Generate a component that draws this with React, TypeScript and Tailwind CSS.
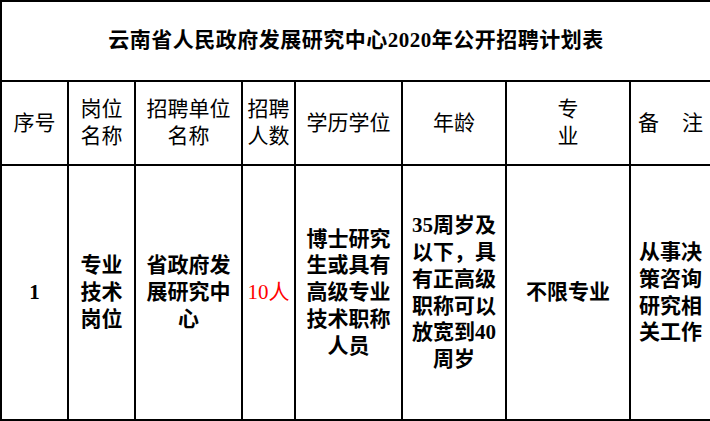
import React from 'react';

const font = { fontFamily: '"Liberation Serif", "Noto Sans CJK SC", serif' };

const cell = 'border-2 border-black text-center align-middle p-0';

interface Row {
  no: string;
  post: string[];
  unit: string[];
  count: string;
  edu: string[];
  age: string[];
  major: string[];
  note: string[];
}

const rows: Row[] = [
  {
    no: '1',
    post: ['专业', '技术', '岗位'],
    unit: ['省政府发', '展研究中', '心'],
    count: '10人',
    edu: ['博士研究', '生或具有', '高级专业', '技术职称', '人员'],
    age: ['35周岁及', '以下，具', '有正高级', '职称可以', '放宽到40', '周岁'],
    major: ['不限专业'],
    note: ['从事决', '策咨询', '研究相', '关工作'],
  },
];

const Lines: React.FC<{ lines: string[] }> = ({ lines }) => (
  <>
    {lines.map((l, i) => (
      <div key={i}>{l}</div>
    ))}
  </>
);

export default function App() {
  return (
    <div className="bg-white w-[710px] h-[421px] text-black" style={font}>
      <table className="border-collapse table-fixed w-[710px] h-[421px]">
        <colgroup>
          <col className="w-[67px]" />
          <col className="w-[67px]" />
          <col className="w-[107px]" />
          <col className="w-[53px]" />
          <col className="w-[107px]" />
          <col className="w-[104px]" />
          <col className="w-[124px]" />
          <col className="w-[81px]" />
        </colgroup>
        <tbody>
          <tr className="h-[80px]">
            <td colSpan={8} className={`${cell} text-[21px] font-bold tracking-[0.5px]`}>
              云南省人民政府发展研究中心2020年公开招聘计划表
            </td>
          </tr>
          <tr className="h-[84px] text-[21px] leading-[27px]">
            <td className={cell}>序号</td>
            <td className={cell}>
              <Lines lines={['岗位', '名称']} />
            </td>
            <td className={cell}>
              <Lines lines={['招聘单位', '名称']} />
            </td>
            <td className={cell}>
              <Lines lines={['招聘', '人数']} />
            </td>
            <td className={cell}>学历学位</td>
            <td className={cell}>年龄</td>
            <td className={cell}>
              <Lines lines={['专', '业']} />
            </td>
            <td className={cell}>
              <div className="flex justify-between px-[7px]">
                <span>备</span>
                <span>注</span>
              </div>
            </td>
          </tr>
          {rows.map(r => (
            <tr key={r.no} className="text-[21px] leading-[26.7px] font-bold">
              <td className={cell}>{r.no}</td>
              <td className={cell}>
                <Lines lines={r.post} />
              </td>
              <td className={cell}>
                <Lines lines={r.unit} />
              </td>
              <td className={`${cell} font-normal text-[#ff0000]`}>{r.count}</td>
              <td className={cell}>
                <Lines lines={r.edu} />
              </td>
              <td className={cell}>
                <Lines lines={r.age} />
              </td>
              <td className={cell}>
                <Lines lines={r.major} />
              </td>
              <td className={cell}>
                <Lines lines={r.note} />
              </td>
            </tr>
          ))}
        </tbody>
      </table>
    </div>
  );
}
